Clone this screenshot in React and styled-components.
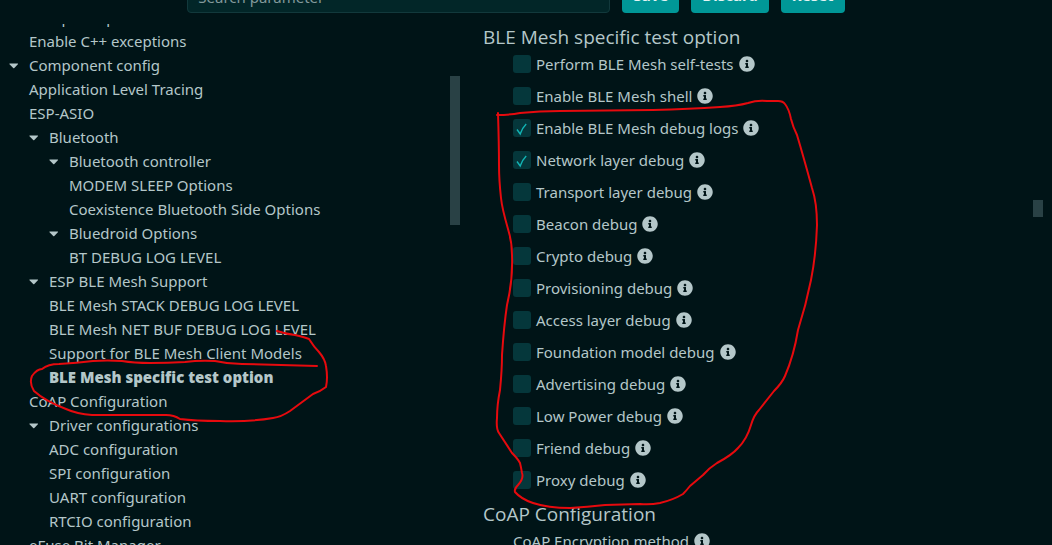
import React, { useState } from 'react';
import styled, { createGlobalStyle } from 'styled-components';
import { FaInfoCircle } from 'react-icons/fa';

const GlobalStyle = createGlobalStyle`
  * { box-sizing: border-box; }
  html, body { margin: 0; background: #001417; }
  body {
    color: #b4c7c9;
    font-family: "Noto Sans", "Open Sans", sans-serif;
    font-size: 15px;
    line-height: 24px;
  }
`;

const Page = styled.div`
  position: relative;
  display: flex;
  flex-direction: column;
  height: 100vh;
  overflow: hidden;
`;

const Toolbar = styled.header`
  display: flex;
  flex: none;
  justify-content: center;
  gap: 12px;
  margin-top: -23px;
  padding-right: 20px;
`;

const SearchBox = styled.input`
  width: 41%;
  height: 36px;
  padding: 4px 10px 0;
  border: 1px solid #12393c;
  border-radius: 4px;
  background: #022628;
  color: #b4c7c9;
  font: inherit;
  &::placeholder { color: #82999b; opacity: 1; }
`;

const ActionButton = styled.button`
  height: 36px;
  padding: 0 11px;
  border: 0;
  border-radius: 4px;
  background: #009797;
  color: #e4f4f4;
  font: inherit;
  font-weight: 700;
`;

const Columns = styled.div`
  display: flex;
  flex: 1;
  min-height: 0;
  padding-top: 11px;
`;

const Sidebar = styled.nav`
  display: flex;
  flex: 0 0 460px;
  overflow: hidden;
`;

const Tree = styled.ul`
  flex: 1;
  margin: -19px 0 0;
  padding: 0;
  list-style: none;
`;

const TreeRow = styled.li`
  display: grid;
  grid-template-columns: 20px 1fr;
  align-items: center;
  height: 24px;
  padding-left: ${({ $level }) => 9 + $level * 20}px;
`;

const Toggle = styled.button`
  display: flex;
  width: 10px;
  padding: 2px 0 0;
  border: 0;
  background: none;
  color: inherit;
`;

const TreeLink = styled.a`
  grid-column: 2;
  color: inherit;
  font-family: ${({ $active }) => ($active ? '"Open Sans", sans-serif' : 'inherit')};
  font-weight: ${({ $active }) => ($active ? 800 : 400)};
  text-decoration: none;
  white-space: nowrap;
`;

const Thumb = styled.div`
  flex: none;
  width: 10px;
  height: ${({ $size }) => $size}px;
  margin-top: ${({ $top }) => $top}px;
  background: #294145;
`;

const Settings = styled.main`
  display: flex;
  flex: 1;
  min-width: 0;
  padding: 0 9px 0 23px;
  overflow: hidden;
`;

const Sections = styled.div`
  flex: 1;
  min-width: 0;
`;

const Heading = styled.h2`
  margin: 0;
  font-family: "Open Sans", sans-serif;
  font-size: 19px;
  font-weight: 400;
  line-height: 26px;
`;

const Options = styled.div`
  margin-bottom: 8px;
  padding-left: 30px;
`;

const OptionRow = styled.div`
  display: flex;
  align-items: center;
  gap: 5px;
  height: 27px;
  & + & { margin-top: 5px; }
`;

const OptionLabel = styled.label`
  display: flex;
  align-items: center;
  gap: 5px;
  white-space: nowrap;
`;

const BoxStack = styled.span`
  display: grid;
  place-items: center;
  & > * { grid-area: 1 / 1; }
  & > svg { pointer-events: none; }
`;

const Checkbox = styled.input`
  appearance: none;
  width: 18px;
  height: 18px;
  margin: 0;
  border-radius: 3px;
  background: #05373b;
`;

const tree = [
  [0, false, 'Compiler options'],
  [0, false, 'Enable C++ exceptions'],
  [0, true, 'Component config'],
  [0, false, 'Application Level Tracing'],
  [0, false, 'ESP-ASIO'],
  [1, true, 'Bluetooth'],
  [2, true, 'Bluetooth controller'],
  [2, false, 'MODEM SLEEP Options'],
  [2, false, 'Coexistence Bluetooth Side Options'],
  [2, true, 'Bluedroid Options'],
  [2, false, 'BT DEBUG LOG LEVEL'],
  [1, true, 'ESP BLE Mesh Support'],
  [1, false, 'BLE Mesh STACK DEBUG LOG LEVEL'],
  [1, false, 'BLE Mesh NET BUF DEBUG LOG LEVEL'],
  [1, false, 'Support for BLE Mesh Client Models'],
  [1, false, 'BLE Mesh specific test option'],
  [0, false, 'CoAP Configuration'],
  [1, true, 'Driver configurations'],
  [1, false, 'ADC configuration'],
  [1, false, 'SPI configuration'],
  [1, false, 'UART configuration'],
  [1, false, 'RTCIO configuration'],
  [0, false, 'eFuse Bit Manager'],
];

const options = [
  'Perform BLE Mesh self-tests',
  'Enable BLE Mesh shell',
  'Enable BLE Mesh debug logs',
  'Network layer debug',
  'Transport layer debug',
  'Beacon debug',
  'Crypto debug',
  'Provisioning debug',
  'Access layer debug',
  'Foundation model debug',
  'Advertising debug',
  'Low Power debug',
  'Friend debug',
  'Proxy debug',
];

const Ink = styled.svg`
  position: absolute;
  top: 0;
  left: 0;
  pointer-events: none;
  fill: none;
  stroke: #e60a0e;
  stroke-width: 2;
  stroke-linecap: round;
  stroke-linejoin: round;
`;

function Option({ label, initial }) {
  const [checked, setChecked] = useState(initial);
  return (
    <OptionRow>
      <OptionLabel>
        <BoxStack>
          <Checkbox type="checkbox" checked={checked} onChange={() => setChecked(!checked)} />
          {checked && (
            <svg width="18" height="18" viewBox="0 0 18 18" fill="none" stroke="#12b5b5" strokeWidth="1.4">
              <path d="M4 10.5 7.2 15 Q9.2 9 13.2 5" />
            </svg>
          )}
        </BoxStack>
        {label}
      </OptionLabel>
      <FaInfoCircle size={16} />
    </OptionRow>
  );
}

export default function App() {
  return (
    <Page>
      <GlobalStyle />
      <Toolbar>
        <SearchBox type="search" placeholder="Search parameter" aria-label="Search parameter" />
        <ActionButton>Save</ActionButton>
        <ActionButton>Discard</ActionButton>
        <ActionButton>Reset</ActionButton>
      </Toolbar>
      <Columns>
        <Sidebar>
          <Tree>
            {tree.map(([level, open, label]) => (
              <TreeRow key={label} $level={level}>
                {open && (
                  <Toggle aria-label={`Collapse ${label}`}>
                    <svg width="10" height="6" viewBox="0 0 10 6" fill="currentColor">
                      <path d="M.8.5h7.9q.7 0 .2.7L5.3 4.9q-.6.5-1.1 0L.5 1.2Q0 .5.8.5Z" />
                    </svg>
                  </Toggle>
                )}
                <TreeLink href="#" $active={label === 'BLE Mesh specific test option'}>{label}</TreeLink>
              </TreeRow>
            ))}
          </Tree>
          <Thumb $top={52} $size={149} />
        </Sidebar>
        <Settings>
          <Sections>
            <Heading>BLE Mesh specific test option</Heading>
            <Options>
              {options.map((label, i) => (
                <Option key={label} label={label} initial={i === 2 || i === 3} />
              ))}
            </Options>
            <Heading>CoAP Configuration</Heading>
            <Options>
              <OptionRow>
                CoAP Encryption method
                <FaInfoCircle size={16} />
              </OptionRow>
            </Options>
          </Sections>
          <Thumb $top={176} $size={17} />
        </Settings>
      </Columns>
      <Ink width="1052" height="545" viewBox="0 0 1052 545" aria-hidden="true">
        <path d="M277 331Q286 334 295 335Q304 337 309 339Q314 347 319 352Q325 359 326 366Q328 378 326 387Q321 391 313 394L290 411Q281 417 273 418Q250 422 220 421Q195 421 180 419Q174 415 166 415H92Q77 414 66 409Q45 401 34 391Q29 383 32 376Q37 369 42 369Q48 364 59 364Q77 363 93 361Q107 360 122 361Q134 363 150 363Q168 363 185 362Q200 360 215 361Q228 364 242 364L317 366" />
        <path d="M497 115Q510 115 520 113Q540 111 560 111L653 110Q690 109 720 107Q737 106 748 103Q757 100 767 101L778 101Q783 101 785 104Q789 109 791 119Q793 127 797 135Q803 155 812 188Q817 203 817 225Q816 255 811 280Q806 305 798 330Q794 355 785 376Q782 383 774 391L759 410Q754 415 751 425Q747 439 738 448Q732 455 717 463Q709 468 703 475L690 486Q686 491 683 494Q673 500 660 503Q650 505 640 504L605 505Q587 507 570 508Q548 508 533 503Q521 499 515 492Q514 489 518 485Q524 478 522 473Q521 467 520 463Q518 459 512 453L499 433Q496 429 497 418Q497 405 500 390Q502 370 502 355Q504 325 507 305Q513 280 512 255Q512 242 508 229Q502 208 501 198Q499 180 499 165Q499 145 498 113" />
      </Ink>
    </Page>
  );
}
